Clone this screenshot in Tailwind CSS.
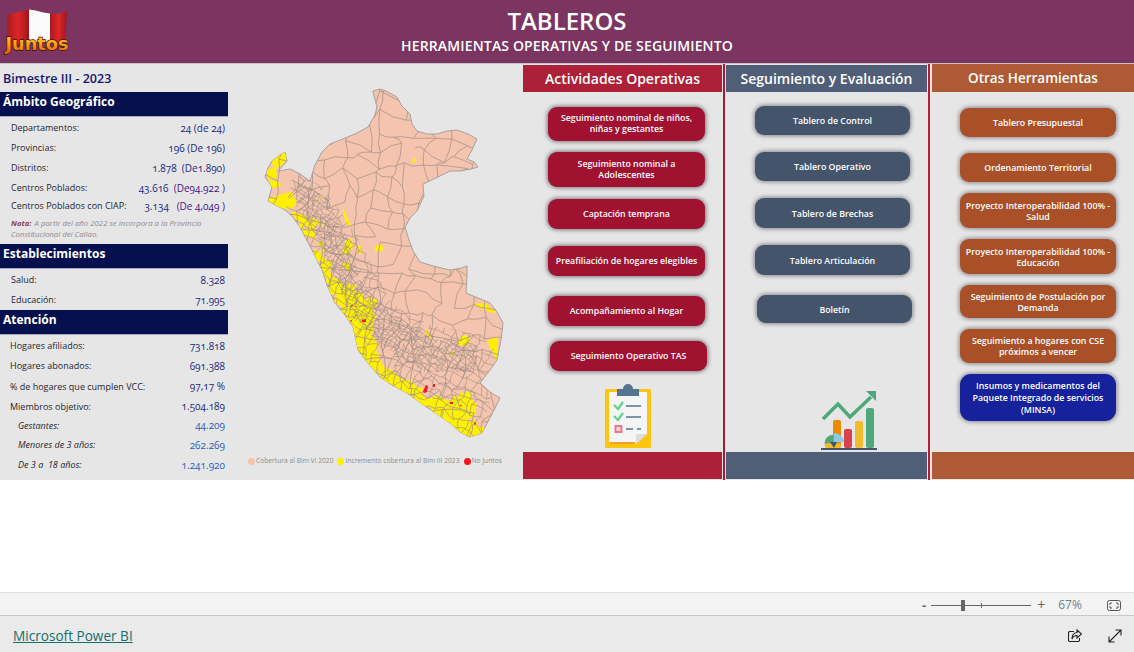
<!DOCTYPE html>
<html lang="es">
<head>
<meta charset="utf-8">
<title>Tableros</title>
<script src="https://cdn.jsdelivr.net/npm/@tailwindcss/browser@4"></script>
</head>
<body class="bg-white font-['Open_Sans','Noto_Sans',sans-serif]">
<div class="flex flex-col w-[1134px] h-[652px] overflow-hidden">

  <!-- header -->
  <header class="relative flex flex-col items-center h-[64px] bg-[#7b3560] border-b border-[#c9c2c8] text-white">
    <svg class="absolute left-0 top-0 w-[76px] h-[60px]" viewBox="0 0 76 60">
      <defs>
        <linearGradient id="jg" x1="0" y1="0" x2="0" y2="1">
          <stop offset="0" stop-color="#ffd93a"/><stop offset="0.55" stop-color="#fb9a12"/><stop offset="1" stop-color="#e0560f"/>
        </linearGradient>
        <linearGradient id="fl" x1="0" y1="0" x2="1" y2="0">
          <stop offset="0" stop-color="#a81a20"/><stop offset="0.5" stop-color="#dd2628"/><stop offset="1" stop-color="#a0151b"/>
        </linearGradient>
      </defs>
      <path d="M7 15 C14 12 22 12 29 9.500 L29 42 L7 44 Z" fill="url(#fl)"/>
      <path d="M29 9.500 C36 10 43 13 50 13.500 L50 42 L29 42 Z" fill="#fbfbfb"/>
      <path d="M50 13.500 C56 14.500 62 13.500 67 11.500 L65 42 L50 42 Z" fill="url(#fl)"/>
      <text x="5.500" y="50" font-family="'DejaVu Sans',sans-serif" font-weight="700" font-size="17" textLength="63" lengthAdjust="spacingAndGlyphs" fill="url(#jg)" stroke="#3c1606" stroke-width="1.300" paint-order="stroke">Juntos</text>
    </svg>
    <h1 class="mt-[5px] text-[24px] leading-[32px] font-semibold">TABLEROS</h1>
    <p class="text-[14px] leading-[18px] font-semibold tracking-[0.15px]">HERRAMIENTAS OPERATIVAS Y DE SEGUIMIENTO</p>
  </header>

  <!-- report -->
  <main class="flex h-[416px] bg-[#e6e6e6]">

    <!-- left panel -->
    <aside class="flex flex-col w-[228px] shrink-0 text-[9px] font-medium text-[#1f1f30]">
      <div class="h-[28px] pl-[3px] pt-[6px] text-[12.500px] leading-[18px] text-[#14166e] font-semibold">Bimestre III - 2023</div>
      <div class="h-[25px] pl-[3px] pt-[1px] text-[12px] leading-[18px] font-bold text-white bg-[#06104f] border-b border-[#a9a9c0]">Ámbito Geográfico</div>
      <div class="flex flex-col pl-[11px] pr-[3px] pt-[1px]">
        <div class="flex justify-between items-center h-[20px]"><span>Departamentos:</span><span class="text-[10px] text-[#1b2a80] oldstyle-nums">24 (de 24)</span></div>
        <div class="flex justify-between items-center h-[20px]"><span>Provincias:</span><span class="text-[10px] text-[#1b2a80] oldstyle-nums">196 (De 196)</span></div>
        <div class="flex justify-between items-center h-[20px]"><span>Distritos:</span><span class="text-[10px] text-[#1b2a80] oldstyle-nums">1.878 &nbsp;(De1.890)</span></div>
        <div class="flex justify-between items-center h-[20px]"><span>Centros Poblados:</span><span class="text-[10px] text-[#1b2a80] oldstyle-nums">43.616 &nbsp;<span class="text-[#4a148c]">(De94.922 )</span></span></div>
        <div class="flex justify-between items-center h-[16px]"><span>Centros Poblados con CIAP:</span><span class="text-[10px] text-[#1b2a80] oldstyle-nums">3.134 &nbsp;<span class="text-[#4a148c]">&nbsp;(De 4,049 )</span></span></div>
        <p class="mt-[4px] text-[7.800px] leading-[11px] italic font-normal text-[#948990]"><b class="mr-[1px] text-[#8f3a55]">Nota:</b> A partir del año 2022 se incorpora a la Provincia Constitucional del Callao.</p>
      </div>
      <div class="mt-[4px] h-[25px] pl-[3px] pt-[1px] text-[12px] leading-[18px] font-bold text-white bg-[#06104f] border-b border-[#a9a9c0]">Establecimientos</div>
      <div class="flex flex-col pl-[11px] pr-[3px] pt-[1px]">
        <div class="flex justify-between items-center h-[20px]"><span>Salud:</span><span class="text-[10px] text-[#1b2a80] oldstyle-nums">8.328</span></div>
        <div class="flex justify-between items-center h-[20px]"><span>Educación:</span><span class="text-[10px] text-[#1b2a80] oldstyle-nums">71.995</span></div>
      </div>
      <div class="h-[25px] pl-[3px] pt-[1px] text-[12px] leading-[18px] font-bold text-white bg-[#06104f] border-b border-[#a9a9c0]">Atención</div>
      <div class="flex flex-col pl-[10px] pr-[3px] pt-[1px]">
        <div class="flex justify-between items-center h-[20px]"><span>Hogares afiliados:</span><span class="text-[10px] text-[#1b2a80] oldstyle-nums">731.818</span></div>
        <div class="flex justify-between items-center h-[20px]"><span>Hogares abonados:</span><span class="text-[10px] text-[#1b2a80] oldstyle-nums">691.388</span></div>
        <div class="flex justify-between items-center h-[21px]"><span>% de hogares que cumplen VCC:</span><span class="text-[10px] text-[#1b2a80] oldstyle-nums">97,17 %</span></div>
        <div class="flex justify-between items-center h-[19px]"><span>Miembros objetivo:</span><span class="text-[10px] text-[#1b2a80] oldstyle-nums">1.504.189</span></div>
        <div class="flex justify-between items-center h-[19px] pl-[8px]"><span class="italic">Gestantes:</span><span class="text-[10px] text-[#2a62b8] oldstyle-nums">44.209</span></div>
        <div class="flex justify-between items-center h-[20px] pl-[8px]"><span class="italic">Menores de 3 años:</span><span class="text-[10px] text-[#2a62b8] oldstyle-nums">262.269</span></div>
        <div class="flex justify-between items-center h-[20px] pl-[8px]"><span class="italic">De 3 a &nbsp;18 años:</span><span class="text-[10px] text-[#2a62b8] oldstyle-nums">1.241.920</span></div>
      </div>
    </aside>

    <!-- map -->
    <section class="flex flex-col w-[295px] shrink-0">
      <svg id="map" class="block w-[295px] h-[392px]" viewBox="228 64 295 392"></svg>
      <div class="flex items-center gap-[1px] pl-[20px] text-[6.700px] leading-[10px] text-[#8d8d8d]">
        <i class="w-[7px] h-[7px] rounded-full bg-[#f5c4ae]"></i><span>Cobertura al Bim VI 2020</span>
        <i class="ml-[3px] w-[7px] h-[7px] rounded-full bg-[#fdf000]"></i><span>Incremento cobertura al Bim III 2023</span>
        <i class="ml-[3px] w-[7px] h-[7px] rounded-full bg-[#f5141c]"></i><span>No Juntos</span>
      </div>
    </section>

    <!-- Actividades -->
    <section class="flex flex-col w-[199px] shrink-0 pt-[1px]">
      <h2 class="h-[27px] shrink-0 bg-[#ad2138] text-white text-center text-[14px] leading-[27px] font-semibold">Actividades Operativas</h2>
      <div class="flex flex-col flex-1 pl-[25px] text-[8.800px] leading-[11px] font-semibold text-white text-center">
        <a class="flex items-center justify-center mt-[15px] w-[157px] h-[34px] px-2 rounded-[9px] bg-[#a11130] shadow-[0_0_4px_1px_#77777f]">Seguimiento nominal de niños, niñas y gestantes</a>
        <a class="flex items-center justify-center mt-[11px] w-[157px] h-[35px] px-6 rounded-[9px] bg-[#a11130] shadow-[0_0_4px_1px_#77777f]">Seguimiento nominal a Adolescentes</a>
        <a class="flex items-center justify-center mt-[12px] w-[157px] h-[30px] rounded-[9px] bg-[#a11130] shadow-[0_0_4px_1px_#77777f]">Captación temprana</a>
        <a class="flex items-center justify-center mt-[17px] w-[157px] h-[30px] rounded-[9px] bg-[#a11130] shadow-[0_0_4px_1px_#77777f]">Preafiliación de hogares elegibles</a>
        <a class="flex items-center justify-center mt-[20px] w-[157px] h-[30px] rounded-[9px] bg-[#a11130] shadow-[0_0_4px_1px_#77777f]">Acompañamiento al Hogar</a>
        <a class="flex items-center justify-center mt-[15px] ml-[2px] w-[157px] h-[30px] rounded-[9px] bg-[#a11130] shadow-[0_0_4px_1px_#77777f]">Seguimiento Operativo TAS</a>
        <svg class="mt-[13px] ml-[57px] w-[46px] h-[65px] shrink-0" viewBox="0 0 46 65">
          <rect x="0" y="5" width="46" height="59" fill="#fdc50f" rx="1"/>
          <path d="M4 8 H42 V50 L30 60 H6 a2 2 0 0 1 -2 -2 Z" fill="#f5f5f5"/>
          <path d="M4 58 H30 V60 H6 Z" fill="#f59e2c"/>
          <path d="M31 60 V51 a1 1 0 0 1 1 -1 H42 Z" fill="#dcdcdc"/>
          <path d="M12 12 V5 H18 a5 5 0 0 1 10 0 H34 V12 Z" fill="#54748f"/>
          <path d="M9 21 L13 25 L18 18" fill="none" stroke="#62d18d" stroke-width="2.200"/>
          <path d="M9 32 L13 36 L18 29" fill="none" stroke="#62d18d" stroke-width="2.200"/>
          <rect x="10.500" y="42" width="6" height="6" fill="#fbd5da" stroke="#ef6f7f" stroke-width="1.800"/>
          <path d="M21 22 H36 M21 33 H36 M21 45 H28 M32 45 H36" stroke="#54748f" stroke-width="1.700"/>
        </svg>
      </div>
      <div class="h-[27px] shrink-0 mb-[1px] bg-[#ad2138]"></div>
    </section>

    <div class="w-[2px] ml-[1px] shrink-0 bg-[#a51c33]"></div>

    <!-- Seguimiento -->
    <section class="flex flex-col w-[201px] ml-[1px] shrink-0 pt-[1px]">
      <h2 class="h-[27px] shrink-0 bg-[#505f77] text-white text-center text-[14px] leading-[27px] font-semibold">Seguimiento y Evaluación</h2>
      <div class="flex flex-col flex-1 pl-[29px] text-[8.800px] leading-[11px] font-semibold text-white text-center">
        <a class="flex items-center justify-center mt-[14px] w-[155px] h-[29px] pt-[2px] rounded-[9px] bg-[#44546a] shadow-[0_0_4px_1px_#85858f]">Tablero de Control</a>
        <a class="flex items-center justify-center mt-[17px] w-[155px] h-[29px] pt-[2px] rounded-[9px] bg-[#44546a] shadow-[0_0_4px_1px_#85858f]">Tablero Operativo</a>
        <a class="flex items-center justify-center mt-[17px] w-[155px] h-[30px] pt-[2px] rounded-[9px] bg-[#44546a] shadow-[0_0_4px_1px_#85858f]">Tablero de Brechas</a>
        <a class="flex items-center justify-center mt-[17px] w-[155px] h-[30px] pt-[2px] rounded-[9px] bg-[#44546a] shadow-[0_0_4px_1px_#85858f]">Tablero Articulación</a>
        <a class="flex items-center justify-center mt-[20px] ml-[2px] w-[155px] h-[28px] pt-[2px] rounded-[9px] bg-[#44546a] shadow-[0_0_4px_1px_#85858f]">Boletín</a>
        <svg class="mt-[68px] ml-[66px] w-[56px] h-[59px] shrink-0" viewBox="0 0 56 59">
          <rect x="12" y="29" width="8" height="28" rx="2" fill="#ec8a00"/>
          <rect x="23" y="38" width="8" height="19" rx="2" fill="#d8434b"/>
          <rect x="34" y="30" width="8" height="27" rx="2" fill="#f0bc2e"/>
          <rect x="45" y="17" width="8" height="40" rx="2" fill="#4fa879"/>
          <path d="M2 28 L17 13 L29 26 L50 6" fill="none" stroke="#4fa879" stroke-width="3.500"/>
          <path d="M45 0 H55 V10 Z" fill="#4fa879"/>
          <path d="M12 44 a8.500 8.500 0 1 0 8.500 8.500 H12 Z" fill="#f0bc2e"/>
          <path d="M12 52 V44 a8.500 8.500 0 0 0 -8.500 8.500 Z" fill="#4fa879"/>
          <path d="M13 42 a9 9 0 0 1 6 2 l3 3 a6 6 0 0 1 1 4 H13 Z" fill="#8ecae6"/>
          <path d="M9 51 H16 L13 57 Z" fill="#44546a"/>
          <rect x="0" y="57" width="56" height="2" fill="#44546a"/>
        </svg>
      </div>
      <div class="h-[27px] shrink-0 mb-[1px] bg-[#505f77]"></div>
    </section>

    <div class="w-[2px] ml-[1px] shrink-0 bg-[#b41f35]"></div>

    <!-- Otras -->
    <section class="flex flex-col w-[202px] ml-[2px] shrink-0">
      <h2 class="h-[28px] shrink-0 bg-[#ae5a34] text-white text-center text-[13.500px] leading-[28px] font-semibold">Otras Herramientas</h2>
      <div class="flex flex-col flex-1 pl-[28px] text-[8.800px] leading-[11px] font-semibold text-white text-center">
        <a class="flex items-center justify-center mt-[16px] w-[156px] h-[29px] pt-[2px] rounded-[9px] bg-[#a95028] shadow-[0_0_4px_1px_#85858f]">Tablero Presupuestal</a>
        <a class="flex items-center justify-center mt-[16px] w-[156px] h-[29px] pt-[2px] rounded-[9px] bg-[#a95028] shadow-[0_0_4px_1px_#85858f]">Ordenamiento Territorial</a>
        <a class="flex items-center justify-center mt-[11px] w-[156px] h-[35px] pt-[2px] rounded-[9px] bg-[#a95028] shadow-[0_0_4px_1px_#85858f]">Proyecto Interoperabilidad 100% - Salud</a>
        <a class="flex items-center justify-center mt-[11px] w-[156px] h-[35px] pt-[2px] rounded-[9px] bg-[#a95028] shadow-[0_0_4px_1px_#85858f]">Proyecto Interoperabilidad 100% - Educación</a>
        <a class="flex items-center justify-center mt-[11px] w-[156px] h-[33px] px-2 pt-[2px] rounded-[9px] bg-[#a95028] shadow-[0_0_4px_1px_#85858f]">Seguimiento de Postulación por Demanda</a>
        <a class="flex items-center justify-center mt-[11px] w-[156px] h-[34px] px-2 pt-[2px] rounded-[9px] bg-[#a95028] shadow-[0_0_4px_1px_#85858f]">Seguimiento a hogares con CSE próximos a vencer</a>
        <a class="flex items-center justify-center mt-[11px] w-[156px] h-[47px] px-2 pt-[1px] leading-[12px] rounded-[11px] bg-[#15229c] shadow-[0_0_4px_1px_#85858f]">Insumos y medicamentos del Paquete Integrado de servicios (MINSA)</a>
      </div>
      <div class="h-[27px] shrink-0 mb-[1px] bg-[#ae5a34]"></div>
    </section>
  </main>

  <!-- white gap -->
  <div class="h-[112px] bg-white"></div>

  <!-- zoom bar -->
  <div class="flex items-center h-[23px] pt-[2px] bg-[#f3f3f3] border-t border-[#e1e1e1] text-[#666]">
    <div class="flex items-center ml-[922px]">
      <span class="text-[13px] leading-none font-bold">-</span>
      <div class="relative ml-[5px] w-[100px] h-[1px] bg-[#666]">
        <i class="absolute left-[30px] top-[-5px] w-[4px] h-[11px] bg-[#666]"></i>
        <i class="absolute left-[50px] top-[-2px] w-[1px] h-[5px] bg-[#666]"></i>
      </div>
      <span class="ml-[6px] text-[14px] leading-none">+</span>
      <span class="ml-[13px] text-[12px] leading-none text-[#6f7f88]">67%</span>
      <svg class="ml-[25px] w-[14px] h-[11px]" viewBox="0 0 14 11" fill="none" stroke="#555" stroke-width="1">
        <rect x="0.500" y="0.500" width="13" height="10" rx="2"/>
        <path d="M3 5 V3 H5 M9 3 H11 V5 M11 6 V8 H9 M5 8 H3 V6"/>
      </svg>
    </div>
  </div>

  <!-- footer -->
  <footer class="flex items-center flex-1 pl-[13px] pt-[3px] bg-[#eaeaea] border-t border-[#c8c8c8]">
    <a class="text-[13.600px] leading-[20px] text-[#14706a] underline">Microsoft Power BI</a>
    <svg class="ml-[935px] w-[14px] h-[14px]" viewBox="0 0 14 14" fill="none" stroke="#222" stroke-width="1.100">
      <path d="M6 2.500 H2 a1.500 1.500 0 0 0 -1.500 1.500 V11 a1.500 1.500 0 0 0 1.500 1.500 H10 a1.500 1.500 0 0 0 1.500 -1.500 V9"/>
      <path d="M9 1 L13.500 5 L9 9 V6.500 C6.500 6.500 5 7.500 4 10 C4 6.500 6 3.800 9 3.500 Z"/>
    </svg>
    <svg class="ml-[26px] w-[14px] h-[14px]" viewBox="0 0 14 14" fill="none" stroke="#222" stroke-width="1.100">
      <path d="M1 13 L13 1 M7.500 1 H13 V6.500 M1 7.500 V13 H6.500"/>
    </svg>
  </footer>
</div>

<script>
(function () {
  var NS = 'http://www.w3.org/2000/svg';
  var svg = document.getElementById('map');
  var seed = 12345;
  function R() { seed = (seed * 16807) % 2147483647; return (seed - 1) / 2147483646; }
  function el(name, attrs, parent) {
    var e = document.createElementNS(NS, name);
    for (var k in attrs) e.setAttribute(k, attrs[k]);
    (parent || svg).appendChild(e);
    return e;
  }
  function pts(a) { return a.map(function (p) { return p[0] + ',' + p[1]; }).join(' '); }
  function inside(p, poly) {
    var c = false;
    for (var i = 0, j = poly.length - 1; i < poly.length; j = i++) {
      var a = poly[i], b = poly[j];
      if ((a[1] > p[1]) !== (b[1] > p[1]) && p[0] < (b[0] - a[0]) * (p[1] - a[1]) / (b[1] - a[1]) + a[0]) c = !c;
    }
    return c;
  }
  var outline = [[373,91],[380,89],[386,91],[397,97],[402,106],[410,114],[412,124],[417,131],[427,134],[437,134],[447,131],[457,130],[468,134],[477,139],[472,150],[467,159],[474,162],[478,167],[471,169],[460,171],[450,171],[438,177],[423,184],[424,196],[417,211],[410,218],[405,227],[409,240],[413,251],[420,262],[433,266],[450,270],[462,268],[467,266],[467,275],[466,293],[478,298],[490,303],[497,312],[503,323],[501,340],[497,360],[490,370],[480,383],[490,392],[500,398],[493,412],[482,433],[470,437],[460,432],[450,423],[428,408],[407,393],[392,385],[380,377],[368,363],[358,350],[356,340],[353,327],[345,315],[335,303],[327,285],[322,270],[312,250],[300,227],[292,216],[285,210],[268,201],[272,187],[265,177],[268,168],[272,161],[280,155],[285,152],[287,161],[278,171],[290,169],[300,174],[310,181],[315,165],[322,152],[330,144],[345,138],[355,134],[368,127],[375,115],[377,107],[373,92]];
  var defs = el('defs', {});
  var cp = el('clipPath', { id: 'pe' }, defs);
  el('polygon', { points: pts(outline) }, cp);
  function clip(id, poly) { var c = el('clipPath', { id: id }, defs); el('polygon', { points: pts(poly) }, c); }

  el('polygon', { points: pts(outline), fill: '#f5c4ae', stroke: '#a8a09c', 'stroke-width': '1' });
  var g = el('g', { 'clip-path': 'url(#pe)' });

  // jittered mesh, turned about the middle of the country so it does not read as a grid
  function grid(s, jit, deg) {
    var n = [], cx = 385, cy = 265, span = 260, cols = Math.ceil(2 * span / s), rows = cols;
    var c = Math.cos(deg * Math.PI / 180), z = Math.sin(deg * Math.PI / 180);
    for (var i = 0; i <= cols; i++) {
      n[i] = [];
      for (var j = 0; j <= rows; j++) {
        var x = -span + i * s + (R() - 0.5) * s * jit, y = -span + j * s + (R() - 0.5) * s * jit;
        n[i][j] = [cx + x * c - y * z, cy + x * z + y * c];
      }
    }
    return { n: n, cols: cols, rows: rows };
  }
  function cellPath(m, i, j) {
    var a = m.n[i][j], b = m.n[i + 1][j], c = m.n[i + 1][j + 1], d = m.n[i][j + 1];
    return 'M' + a[0].toFixed(1) + ' ' + a[1].toFixed(1) + 'L' + b[0].toFixed(1) + ' ' + b[1].toFixed(1) + 'L' + c[0].toFixed(1) + ' ' + c[1].toFixed(1) + 'L' + d[0].toFixed(1) + ' ' + d[1].toFixed(1) + 'Z';
  }
  function fillRegion(poly, s, prob, deg) {
    var m = grid(s, 0.8, deg), d = '';
    for (var i = 0; i < m.cols; i++) for (var j = 0; j < m.rows; j++) {
      var cx = (m.n[i][j][0] + m.n[i + 1][j + 1][0]) / 2, cy = (m.n[i][j][1] + m.n[i + 1][j + 1][1]) / 2;
      if (inside([cx, cy], poly) && R() < prob) d += cellPath(m, i, j);
    }
    el('path', { d: d, fill: '#fdf000' }, g);
  }
  function edges(s, color, width, drop, deg, clipId) {
    var m = grid(s, 0.9, deg), d = '';
    function seg(a, b) {
      var mx = (a[0] + b[0]) / 2 + (R() - 0.5) * s * 0.3, my = (a[1] + b[1]) / 2 + (R() - 0.5) * s * 0.3;
      return 'M' + a[0].toFixed(1) + ' ' + a[1].toFixed(1) + 'L' + mx.toFixed(1) + ' ' + my.toFixed(1) + 'L' + b[0].toFixed(1) + ' ' + b[1].toFixed(1);
    }
    for (var i = 0; i <= m.cols; i++) for (var j = 0; j <= m.rows; j++) {
      if (i < m.cols && R() > drop) d += seg(m.n[i][j], m.n[i + 1][j]);
      if (j < m.rows && R() > drop) d += seg(m.n[i][j], m.n[i][j + 1]);
    }
    var attrs = { d: d, fill: 'none', stroke: color, 'stroke-width': width };
    if (clipId) attrs['clip-path'] = 'url(#' + clipId + ')';
    el('path', attrs, g);
  }

  // yellow coverage (beneath the borders)
  var coastS = [[322,270],[345,283],[375,300],[373,337],[383,367],[407,383],[427,397],[450,398],[467,393],[477,407],[473,417],[484,433],[470,439],[450,425],[407,395],[380,379],[356,350],[351,327],[333,303]];
  var coastM = [[292,214],[302,212],[318,232],[332,262],[326,272],[312,252],[300,230]];
  fillRegion(coastS, 5, 0.9, 20);
  fillRegion([[353,327],[372,340],[380,362],[407,381],[430,398],[452,400],[466,394],[476,410],[474,420],[484,433],[470,439],[450,425],[407,395],[380,379],[356,350]], 6, 0.98, 30);
  fillRegion(coastM, 5, 0.6, 20);

  var solid = [
    [[268,199],[285,193],[292,192],[297,204],[290,209],[278,208],[270,204]],
    [[266,170],[276,167],[277,178],[268,179]],
    [[272,161],[280,153],[285,152],[287,160],[278,168],[273,167]],
    [[268,181],[276,180],[282,186],[272,188]],
    [[291,212],[300,214],[304,222],[296,220]],
    [[342,252],[346,240],[352,238],[353,248],[346,256]],
    [[358,246],[362,246],[361,254],[358,253]],
    [[374,247],[382,244],[384,250],[376,252]],
    [[342,263],[349,262],[349,272],[344,268]],
    [[312,252],[319,252],[323,258],[316,262]],
    [[345,214],[349,226],[352,226],[343,212]],
    [[322,266],[330,272],[338,289],[329,285]],
    [[472,304],[485,303],[497,313],[489,312]],
    [[457,341],[464,335],[470,337],[468,346],[459,345]],
    [[487,341],[498,336],[497,360],[492,352]],
    [[425,328],[431,336],[433,340],[426,334]],
    [[343,285],[350,291],[346,298]],
    [[311,216],[320,222],[324,226],[315,224]],
    [[301,228],[310,231],[314,238],[305,236]],
    [[317,198],[321,196],[320,200]],
    [[342,206],[346,214],[350,224],[346,224]],
    [[449,352],[455,352],[452,356]],
    [[411,163],[414,158],[417,160],[413,163]]
  ];
  solid.forEach(function (p) { el('polygon', { points: pts(p), fill: '#fdf000' }, g); });

  // dense Andean zones
  var andes = [[293,172],[322,186],[350,225],[372,265],[392,305],[430,325],[480,335],[505,360],[490,400],[478,442],[407,397],[356,354],[333,307],[308,252],[285,214]];
  var dense = [[298,180],[327,198],[348,240],[360,280],[380,304],[405,322],[440,340],[478,346],[476,372],[425,372],[382,346],[352,316],[332,270],[312,228],[296,206]];
  clip('an', andes);
  clip('de', dense);

  edges(16, '#a8948a', '0.8', 0.22, 8);
  edges(8, '#a08f88', '0.65', 0.14, 25, 'an');
  edges(4, '#978a86', '0.55', 0.1, 38, 'de');

  // non-covered districts
  [[[423,391],[426,385],[428,386],[427,392],[424,393]],[[433,384],[435,384],[435,387],[433,387]],[[362,320],[366,319],[366,322],[362,322]],[[351,305],[353,305],[352,307]],[[450,402],[453,402],[453,404],[450,404]],[[460,405],[462,405],[461,407]],[[474,423],[476,422],[475,426]],[[350,320],[352,320],[351,322]]].forEach(function (p) {
    el('polygon', { points: pts(p), fill: '#ee1c25' }, g);
  });
})();
</script>
</body>
</html>
